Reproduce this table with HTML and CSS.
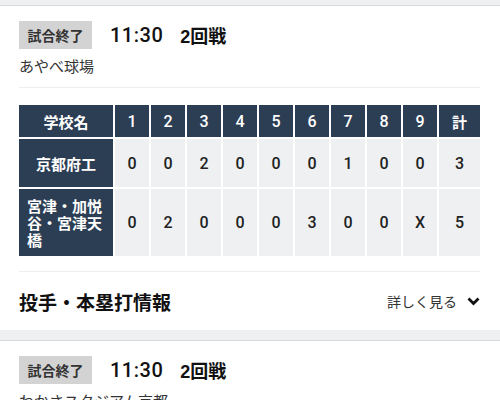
FILE: index.html
```html
<!DOCTYPE html>
<html lang="ja">
<head>
<meta charset="utf-8">
<link rel="stylesheet" href="styles.css">
</head>
<body>
<div class="band band-top"></div>
<section class="card">
  <div class="head">
    <span class="badge">試合終了</span>
    <span class="time">11:30</span>
    <span class="round">2回戦</span>
  </div>
  <div class="venue">あやべ球場</div>
  <div class="score">
    <div class="th name">学校名</div>
    <div class="th">1</div><div class="th">2</div><div class="th">3</div><div class="th">4</div><div class="th">5</div><div class="th">6</div><div class="th">7</div><div class="th">8</div><div class="th">9</div><div class="th kei">計</div>
    <div class="th team">京都府工</div>
    <div class="td">0</div><div class="td">0</div><div class="td">2</div><div class="td">0</div><div class="td">0</div><div class="td">0</div><div class="td">1</div><div class="td">0</div><div class="td">0</div><div class="td">3</div>
    <div class="th team left">宮津・加悦谷・宮津天橋</div>
    <div class="td">0</div><div class="td">2</div><div class="td">0</div><div class="td">0</div><div class="td">0</div><div class="td">3</div><div class="td">0</div><div class="td">0</div><div class="td">X</div><div class="td">5</div>
  </div>
  <div class="more">
    <h2 class="more-title">投手・本塁打情報</h2>
    <span class="more-link">詳しく見る
      <svg class="chev" width="13" height="9" viewBox="0 0 13 9"><path d="M1.5 1.5 L6.5 6.5 L11.5 1.5" fill="none" stroke="#111" stroke-width="2.8"/></svg>
    </span>
  </div>
</section>
<div class="band"></div>
<section class="card">
  <div class="head">
    <span class="badge">試合終了</span>
    <span class="time">11:30</span>
    <span class="round">2回戦</span>
  </div>
  <div class="venue">わかさスタジアム京都</div>
</section>
</body>
</html>
```
FILE: styles.css
```css
html, body {
  margin: 0;
  padding: 0;
  background: #fff;
  font-family: "Liberation Sans", "Noto Sans CJK JP", sans-serif;
  color: #222;
  width: 500px;
  overflow: hidden;
}
.band {
  height: 10px;
  background: #eff0f2;
  border-bottom: 1px solid #d9dadc;
}
.band-top {
  height: 5px;
}
.card {
  background: #fff;
  padding: 15px 20px 0 19px;
}
.head {
  display: flex;
  align-items: center;
  height: 28px;
}
.badge {
  background: #d3d3d3;
  color: #333;
  font-size: 14px;
  font-weight: bold;
  line-height: 28px;
  padding: 0 8.5px;
  font-family: "Noto Sans CJK JP", sans-serif;
}
.time {
  margin-left: 18px;
  font-size: 20px;
  font-weight: 500;
  font-family: Roboto, "Liberation Sans", sans-serif;
  letter-spacing: 0.5px;
  color: #111;
}
.round {
  margin-left: 17px;
  font-size: 18px;
  font-weight: bold;
  color: #111;
}
.venue {
  margin-top: 7px;
  font-size: 15px;
  line-height: 20px;
  color: #333;
  font-family: "Noto Sans CJK JP", sans-serif;
  padding-bottom: 11px;
  border-bottom: 1px solid #eeeeee;
}
.score {
  margin-top: 17px;
  display: grid;
  grid-template-columns: 94px repeat(9, 34px) 41px;
  grid-template-rows: 32px 48px 67px;
  gap: 2px;
  font-size: 16px;
  font-family: Roboto, "Liberation Sans", sans-serif;
}
.th, .td {
  display: flex;
  align-items: center;
  justify-content: center;
}
.th {
  background: #2c3e54;
  color: #fff;
  font-weight: 500;
}
.th.name, .th.team, .th.kei {
  font-size: 15px;
  font-weight: bold;
  font-family: "Noto Sans CJK JP", sans-serif;
}
.th.left {
  justify-content: flex-start;
  padding: 0 8px;
  line-height: 17px;
}
.td {
  background: #eff0f2;
  color: #222;
  font-weight: 500;
}
.more {
  margin-top: 15px;
  border-top: 1px solid #eeeeee;
  display: flex;
  align-items: center;
  justify-content: space-between;
  height: 58px;
}
.more-title {
  margin: 0;
  font-size: 19px;
  font-weight: bold;
  color: #111;
  font-family: "Noto Sans CJK JP", sans-serif;
}
.more-link {
  display: flex;
  align-items: center;
  font-size: 14px;
  color: #333;
  font-family: "Noto Sans CJK JP", sans-serif;
}
.chev {
  margin-left: 10px;
}
```
